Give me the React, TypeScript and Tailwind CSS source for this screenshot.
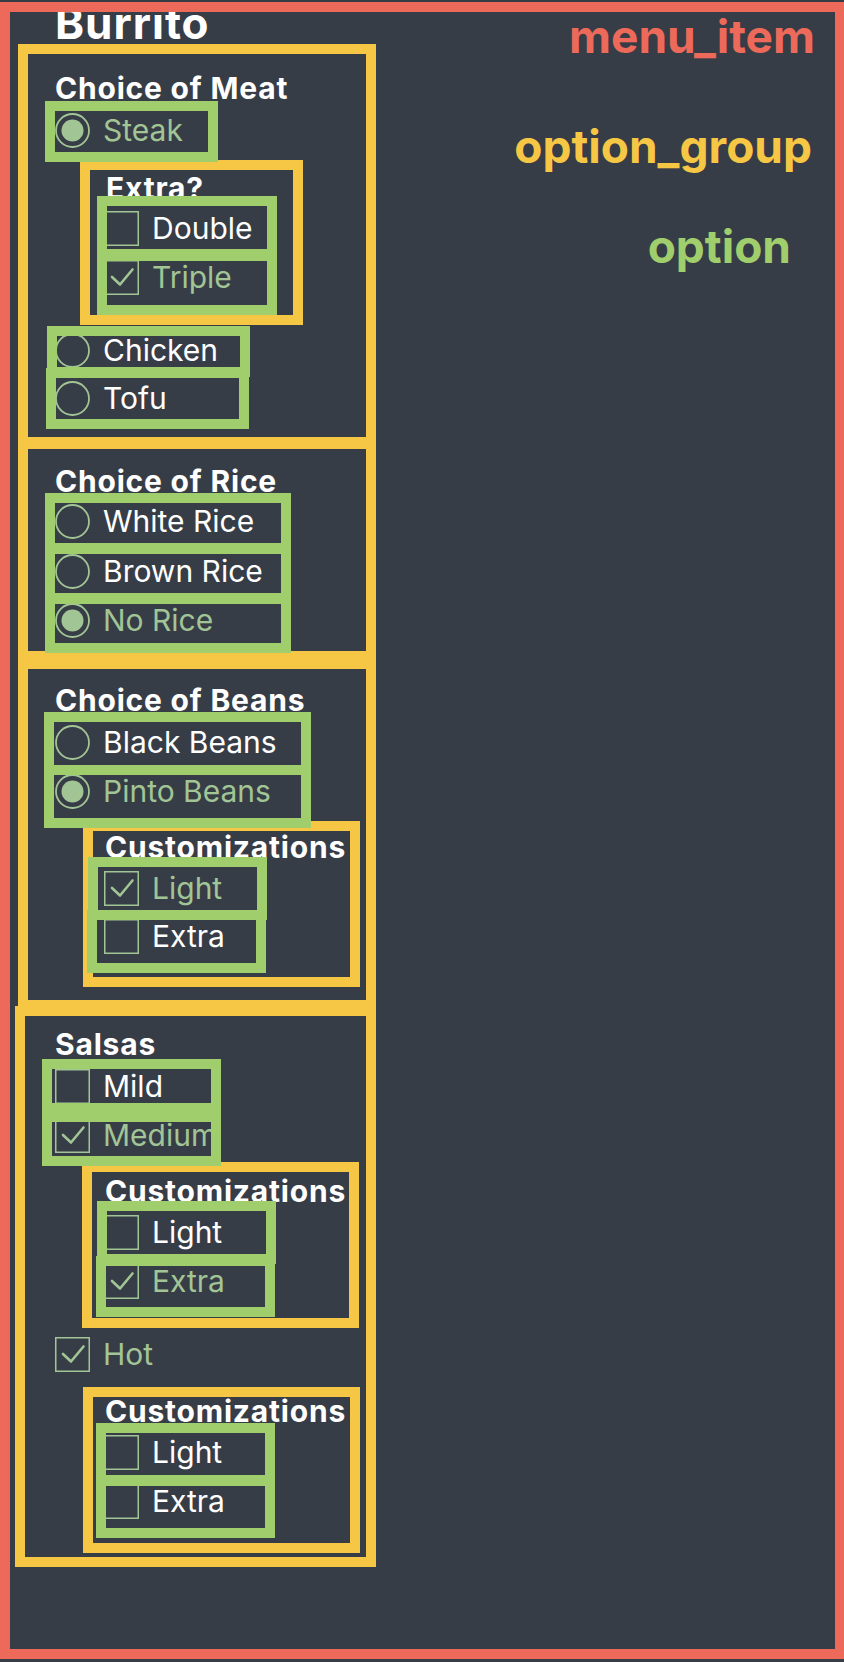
import React from 'react';

const PALE = '#a2c596';

type Kind = 'radio' | 'check';

interface OptionProps {
    label: string;
    kind: Kind;
    selected?: boolean;
    framed?: boolean;
    box: string;
}

const Radio: React.FC<{ on?: boolean }> = ({ on }) => (
    <svg width="35" height="35" viewBox="0 0 35 35" className="shrink-0">
        <circle cx="17.5" cy="17.5" r="16.5" fill="none" stroke={PALE} strokeWidth="1.8" />
        {on && <circle cx="17.5" cy="17.5" r="11" fill={PALE} />}
    </svg>
);

const Check: React.FC<{ on?: boolean }> = ({ on }) => (
    <svg width="35" height="35" viewBox="0 0 35 35" className="shrink-0">
        <rect x="0.75" y="0.75" width="33.5" height="33.5" fill="none" stroke={PALE} strokeWidth="1.5" />
        {on && (
            <polyline
                points="8,17 16,24.5 28.5,9.5"
                fill="none"
                stroke={PALE}
                strokeWidth="2.6"
                strokeLinecap="round"
                strokeLinejoin="round"
            />
        )}
    </svg>
);

export const Option: React.FC<OptionProps> = ({ label, kind, selected, framed = true, box }) => {
    return (
        <div
            className={`relative z-10 flex items-start ${framed ? 'outline-solid outline-[10px] outline-offset-[-5px] outline-[#a0ce6c]' : ''} ${box}`}
        >
            <div className="flex h-[36px] items-center gap-[13px]">
                {kind === 'radio' ? <Radio on={selected} /> : <Check on={selected} />}
                <span
                    className={`whitespace-nowrap text-[30px] leading-[36px] ${selected ? 'text-[#a2c596]' : 'text-white'}`}
                >
                    {label}
                </span>
            </div>
        </div>
    );
};

const groupFrame = 'outline-solid outline-[10px] outline-offset-[-5px] outline-[#f6c744]';

const GroupTitle: React.FC<{ children: React.ReactNode; className?: string }> = ({ children, className = '' }) => (
    <div className={`h-[36px] whitespace-nowrap text-[30px] font-bold leading-[36px] tracking-[0.8px] text-white ${className}`}>
        {children}
    </div>
);

export default function App() {
    return (
        <div
            className="min-h-[1662px] w-full overflow-hidden bg-[#373d46] pl-[5px] pt-[7px]"
            style={{ fontFamily: 'Inter, "Noto Sans", sans-serif' }}
        >
            {/* menu_item */}
            <div className="flex h-[1647px] w-[835px] outline-solid outline-[10px] outline-offset-[-5px] outline-[#ed6a5a]">

                <div className="flex w-[366px] shrink-0 flex-col">
                    <div className="-mt-[5px] h-[42px] pl-[50px] text-[44px] font-bold leading-[42px] tracking-[1px] text-white">
                        Burrito
                    </div>

                    {/* Choice of Meat */}
                    <div className={`ml-[18px] mt-[5px] flex w-[348px] flex-col pb-[18px] pl-[32px] pt-[21px] ${groupFrame}`}>
                        <GroupTitle>Choice of Meat</GroupTitle>
                        <Option label="Steak" kind="radio" selected box="-ml-[5px] pl-[5px] w-[163px] h-[51px] pt-[6px]" />

                        <div className={`ml-[30px] mt-[8px] flex w-[213px] flex-col pb-[10px] pl-[19px] pt-[5px] ${groupFrame}`}>
                            <GroupTitle className="ml-[2px]">Extra?</GroupTitle>
                            <Option label="Double" kind="check" box="-mt-[5px] -ml-[2px] pl-[2px] w-[170px] h-[53px] pt-[9px]" />
                            <Option label="Triple" kind="check" selected box="mt-[2px] -ml-[2px] pl-[2px] w-[170px] h-[54px] pt-[3px]" />
                        </div>

                        <Option label="Chicken" kind="radio" box="mt-[11px] -ml-[3px] pl-[3px] w-[193px] h-[41px] pt-[1px]" />
                        <Option label="Tofu" kind="radio" box="mt-[1px] -ml-[4px] pl-[4px] w-[193px] h-[51px] pt-[7px]" />
                    </div>

                    {/* Choice of Rice */}
                    <div className={`ml-[18px] mt-[2px] flex w-[348px] flex-col pb-[8px] pl-[32px] pt-[19px] ${groupFrame}`}>
                        <GroupTitle>Choice of Rice</GroupTitle>
                        <Option label="White Rice" kind="radio" box="-mt-[1px] -ml-[5px] pl-[5px] w-[236px] h-[50px] pt-[5px]" />
                        <Option label="Brown Rice" kind="radio" box="mt-[1px] -ml-[5px] pl-[5px] w-[236px] h-[49px] pt-[4px]" />
                        <Option label="No Rice" kind="radio" selected box="mt-[1px] -ml-[5px] pl-[5px] w-[236px] h-[49px] pt-[3px]" />
                    </div>

                    {/* Choice of Beans */}
                    <div className={`ml-[18px] mt-[8px] flex w-[348px] flex-col pb-[23px] pl-[32px] pt-[18px] ${groupFrame}`}>
                        <GroupTitle>Choice of Beans</GroupTitle>
                        <Option label="Black Beans" kind="radio" box="-mt-[1px] -ml-[6px] pl-[6px] w-[257px] h-[53px] pt-[7px]" />
                        <Option label="Pinto Beans" kind="radio" selected box="-ml-[6px] pl-[6px] w-[257px] h-[53px] pt-[3px]" />

                        <div className={`ml-[33px] mt-[3px] flex w-[267px] flex-col pb-[14px] pl-[16px] pt-[3px] ${groupFrame}`}>
                            <GroupTitle className="ml-[1px]">Customizations</GroupTitle>
                            <Option label="Light" kind="check" selected box="-mt-[3px] -ml-[11px] pl-[11px] w-[169px] h-[53px] pt-[8px]" />
                            <Option label="Extra" kind="check" box="-ml-[12px] pl-[12px] w-[169px] h-[53px] pt-[3px]" />
                        </div>
                    </div>

                    {/* Salsas */}
                    <div className={`ml-[15px] mt-[6px] flex w-[351px] flex-col pb-[14px] pl-[35px] pt-[15px] ${groupFrame}`}>
                        <GroupTitle>Salsas</GroupTitle>
                        <Option label="Mild" kind="check" box="mt-[2px] -ml-[8px] pl-[8px] w-[169px] h-[44px] pt-[4px]" />
                        <Option label="Medium" kind="check" selected box="mt-[9px] -ml-[8px] pl-[8px] w-[169px] h-[44px] pt-0" />

                        <div className={`ml-[32px] mt-[6px] flex w-[267px] flex-col pb-[11px] pl-[17px] pt-[6px] ${groupFrame}`}>
                            <GroupTitle className="ml-[1px]">Customizations</GroupTitle>
                            <Option label="Light" kind="check" box="-mt-[3px] -ml-[2px] pl-[2px] w-[169px] h-[53px] pt-[8px]" />
                            <Option label="Extra" kind="check" selected box="mt-[2px] -ml-[3px] pl-[3px] w-[169px] h-[51px] pt-[2px]" />
                        </div>

                        <Option label="Hot" kind="check" selected framed={false} box="mt-[13px] h-[36px]" />

                        <div className={`ml-[33px] mt-[20px] flex w-[267px] flex-col pb-[15px] pl-[16px] pt-[1px] ${groupFrame}`}>
                            <GroupTitle className="ml-[1px]">Customizations</GroupTitle>
                            <Option label="Light" kind="check" box="-mt-[1px] -ml-[3px] pl-[3px] w-[169px] h-[52px] pt-[6px]" />
                            <Option label="Extra" kind="check" box="mt-[1px] -ml-[3px] pl-[3px] w-[169px] h-[52px] pt-[2px]" />
                        </div>
                    </div>
                </div>

                {/* legend */}
                <div className="flex flex-1 flex-col items-end text-[46px] font-bold leading-[44px]">
                    <div className="mr-[25px] mt-[7px] h-[44px] text-[#ed6a5a]">menu_item</div>
                    <div className="mr-[28px] mt-[66px] h-[44px] text-[#f6c744]">option_group</div>
                    <div className="mr-[49px] mt-[56px] h-[44px] text-[#a0ce6c]">option</div>
                </div>
            </div>
        </div>
    );
}
